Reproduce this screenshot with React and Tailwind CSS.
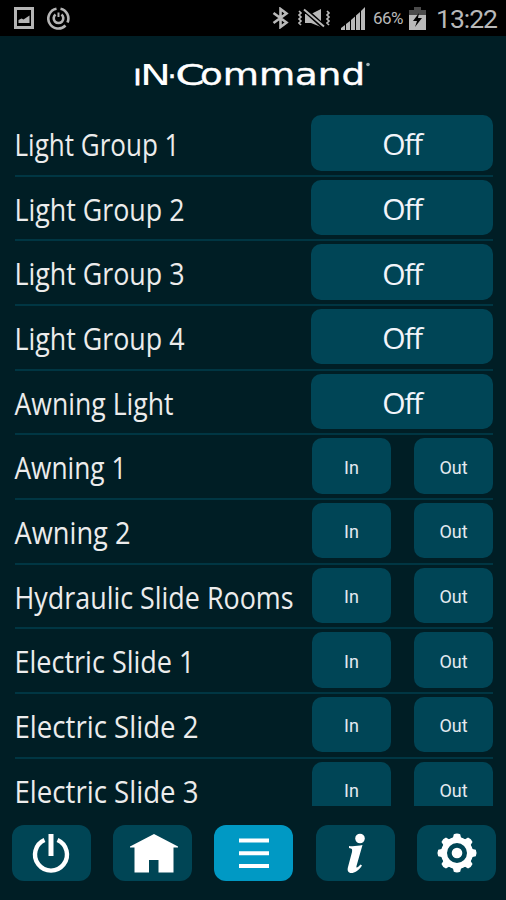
import clsx from "clsx";

const lightRows = [
    { label: "Light Group 1", width: 164 },
    { label: "Light Group 2", width: 169 },
    { label: "Light Group 3", width: 169 },
    { label: "Light Group 4", width: 169 },
    { label: "Awning Light", width: 158 },
];

const motorRows = [
    { label: "Awning 1", width: 111 },
    { label: "Awning 2", width: 115 },
    { label: "Hydraulic Slide Rooms", width: 278 },
    { label: "Electric Slide 1", width: 179 },
    { label: "Electric Slide 2", width: 183 },
    { label: "Electric Slide 3", width: 183 },
];

const StatusBar = () => (
    <div className="flex h-[36px] shrink-0 items-center bg-black pl-[14px] pr-[9px] text-[#b9b9b9]">
        <svg width="20" height="22" viewBox="0 0 20 22">
            <rect x="1.5" y="1.5" width="17" height="19" fill="none" stroke="#b5b5b5" strokeWidth="3" />
            <path d="M4.500 16v-3l3-1.500 2 1 6-4V16z" fill="#b5b5b5" />
        </svg>
        <svg className="ml-[13px]" width="23" height="23" viewBox="0 0 23 23" fill="none" stroke="#b5b5b5">
            <path d="M9.500 1.700A10 10 0 1 0 18.500 18.500M20.500 15.500A10 10 0 0 0 13.500 1.700" strokeWidth="2.600" />
            <path d="M8.500 7.500A4.800 4.800 0 1 0 14.500 7.500" strokeWidth="2.600" />
            <path d="M11.500 5.500v4.500" strokeWidth="2" />
        </svg>

        <svg className="ml-auto" width="17" height="22" viewBox="0 0 17 22" fill="none" stroke="currentColor" strokeWidth="2.600">
            <path d="M1.500 6l13 9.500L8.500 20V2l6 4.500L1.500 16" />
        </svg>
        <svg className="ml-[8px]" width="34" height="20" viewBox="0 0 34 20" fill="none" stroke="currentColor">
            <path d="M2 3l2 2-2 2 2 2-2 2 2 2-2 2 2 2M30 3l2 2-2 2 2 2-2 2 2 2-2 2 2 2" strokeWidth="1.700" />
            <path d="M8 6v9h6l10 4V1l-10 5z" fill="currentColor" stroke="none" />
            <path d="M7 1l20 18" stroke="black" strokeWidth="5" />
            <path d="M7 1.500l20 17" strokeWidth="2" />
        </svg>
        <svg className="ml-[10px]" width="24" height="24" viewBox="0 0 24 24" fill="currentColor">
            <path d="M0 24v-2l4-3v5zM5 24v-6l4-3v9zM10 24V14l4-3.500V24zM15 24V9.500l4-3.500V24zM20 24V5l4-4v23z" />
        </svg>
        <span className="ml-[8px] mt-[2px] w-[32px] whitespace-nowrap font-[Roboto] text-[17px] tracking-[-0.6px]">66%</span>
        <svg className="ml-[4px]" width="17" height="23" viewBox="0 0 17 23">
            <path d="M5 0h7v3h5v8H0V3h5z" fill="#4b4b4b" />
            <path d="M0 8h17v15H0z" fill="#b9b9b9" />
            <path d="M10 6l-6 8h4l-2 6 7-9H9z" fill="black" />
        </svg>
        <span className="ml-[10px] mt-[2px] w-[61px] whitespace-nowrap font-[Roboto] text-[26.5px] tracking-[-1px]">13:22</span>
    </div>
);

const Logo = () => (
    <svg
        className="mx-auto mt-[20px] h-[36px] w-[240px] shrink-0"
        viewBox="0 0 240 36"
        fill="white"
        stroke="white"
        fontSize="28.5"
        fontFamily="DejaVu Sans, sans-serif"
    >
        <text x="0.500" y="28.500" strokeWidth="0.9">ı</text>
        <text x="7" y="28.500" textLength="31" lengthAdjust="spacingAndGlyphs" strokeWidth="0">N</text>
        <text x="34.500" y="29.500" strokeWidth="0.4">·</text>
        <text x="42.500" y="28.500" textLength="29" lengthAdjust="spacingAndGlyphs" strokeWidth="0.4">C</text>
        <text x="67" y="28.500" fontSize="30" textLength="165" lengthAdjust="spacingAndGlyphs" strokeWidth="0.4">ommand</text>
        <circle cx="235" cy="8.500" r="1.800" fill="#9fb0b5" stroke="none" />
    </svg>
);

const Label = ({ text, width }) => (
    <svg className="mt-[4px] h-[50px] w-[294px] shrink-0 overflow-visible" fill="#ececec" fontFamily="Open Sans, sans-serif">
        <text x="-0.500" y="37" fontSize="30.5" textLength={width + 1} lengthAdjust="spacingAndGlyphs">{text}</text>
    </svg>
);

const Row = ({ label, width, children }) => (
    <div className="flex h-[64.670px] shrink-0 items-start justify-between border-b-2 border-[#003643] pt-[3px]">
        <Label text={label} width={width} />
        {children}
    </div>
);

const MotorButton = ({ children }) => (
    <button className="h-[55.500px] w-[79px] rounded-[10px] bg-[#004556] pt-[2px] font-[Roboto] text-[18px] text-[#e4eaf0]">
        {children}
    </button>
);

const NavButton = ({ active, children }) => (
    <button
        className={clsx(
            "flex h-[56px] w-[79px] items-center justify-center rounded-[12px] text-white",
            active ? "bg-[#0099c4]" : "bg-[#004555]"
        )}
    >
        {children}
    </button>
);

const App = () => {
    return (
        <div className="flex h-[900px] w-[506px] flex-col overflow-hidden bg-[#001e25]">
            <StatusBar />
            <Logo />

            <div className="mt-[20px] h-[694px] shrink-0 overflow-hidden pl-[15px] pr-[13px]">
                {lightRows.map(({ label, width }) => (
                    <Row key={label} label={label} width={width}>
                        <button className="h-[55.500px] w-[182px] rounded-[10px] bg-[#004556] pt-[2px] font-['Open_Sans'] text-[30px] tracking-[-1.4px] text-[#f2f4fa]">
                            Off
                        </button>
                    </Row>
                ))}
                {motorRows.map(({ label, width }) => (
                    <Row key={label} label={label} width={width}>
                        <div className="flex gap-[23px]">
                            <MotorButton>In</MotorButton>
                            <MotorButton>Out</MotorButton>
                        </div>
                    </Row>
                ))}
            </div>

            <div className="mt-[19px] flex shrink-0 justify-between pl-[11.500px] pr-[10px]">
                <NavButton>
                    <svg width="40" height="44" viewBox="0 0 40 44" fill="none" stroke="currentColor">
                        <path d="M13.500 9A16 16 0 1 0 26.500 9" strokeWidth="4.400" />
                        <path d="M20 3v22" strokeWidth="5" />
                    </svg>
                </NavButton>
                <NavButton>
                    <svg className="ml-[3px]" width="48" height="44" viewBox="0 0 48 44" fill="currentColor">
                        <path d="M24 3L0 15.500v1h4.500V41.500H19V29h9.500v12.500H43.500v-25H48v-1z" />
                    </svg>
                </NavButton>
                <NavButton active>
                    <svg width="30" height="34" viewBox="0 0 30 34" fill="currentColor">
                        <path d="M0 2.500h30v4H0zM0 15.200h30v4H0zM0 27.900h30v4H0z" />
                    </svg>
                </NavButton>
                <NavButton>
                    <svg width="24" height="44" viewBox="0 0 24 44" fill="currentColor">
                        <circle cx="17" cy="7.500" r="4.800" />
                        <path d="M6 15C10 15.500 15 15 19.500 14L13.500 35C13 37.500 14.500 37 17.500 33.500L19 34.500C15.500 40 11.500 42 8.500 42C5 42 4 39.500 5 36L9 21C9.500 18 9 17.500 6 17z" />
                    </svg>
                </NavButton>
                <NavButton>
                    <svg width="42" height="42" viewBox="-21 -21 42 42" fill="currentColor">
                        {[0, 45, 90, 135, 180, 225, 270, 315].map((angle) => (
                            <path key={angle} d="M-7 -13L-4 -15.500L-3.200 -18.800Q0 -20.300 3.200 -18.800L4 -15.500L7 -13z" transform={`rotate(${angle})`} />
                        ))}
                        <circle r="13" fill="none" stroke="currentColor" strokeWidth="6" />
                        <circle r="5.300" />
                    </svg>
                </NavButton>
            </div>
        </div>
    );
};

export default App;
